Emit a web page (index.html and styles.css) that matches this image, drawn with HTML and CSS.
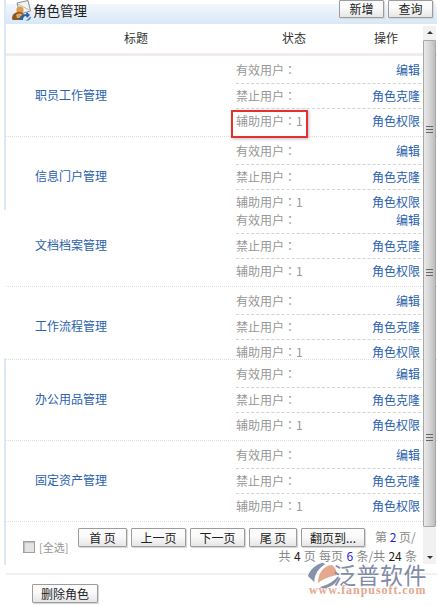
FILE: index.html
```html
<!DOCTYPE html>
<html lang="zh-CN">
<head>
<meta charset="utf-8">
<title>角色管理</title>
<link rel="stylesheet" href="styles.css">
</head>
<body>
<div class="page">
  <div class="edge edge-top"></div>
  <div class="edge edge-bottom"></div>

  <header class="titlebar">
    <svg class="title-icon" viewBox="0 0 20 21" width="20" height="21" aria-hidden="true">
      <path d="M6 3 17 0.5 19.5 11 9 14Z" fill="#f2f2f0" stroke="#8d8d8d" stroke-width="1"/>
      <path d="M7 4 18 10" stroke="#b9b9b9" fill="none"/>
      <circle cx="9" cy="10" r="3.6" fill="#e09a4a"/>
      <path d="M1 19c0-5 3-7 7-7s5 2 5 4l-3 4H2Z" fill="#8a5a22"/>
      <path d="M5 15c2-2 5-2 7 0l-2 3H6Z" fill="#e8a558"/>
      <path d="M8 20c0-3 3-6 7-6l1-2 3 3-3 3-1-2c-2 0-3 2-3 4Z" fill="#2f62a8"/>
      <path d="M13 20.500c3 0 5-2 6-4l1 1c-1 2-2 3-3 3Z" fill="#3d78c2"/>
    </svg>
    <h1 class="title">角色管理</h1>
    <div class="title-actions">
      <button class="btn btn-top" type="button">新增</button>
      <button class="btn btn-top" type="button">查询</button>
    </div>
  </header>

  <div class="table-head">
    <span class="head-title">标题</span>
    <span class="head-status">状态</span>
    <span class="head-action">操作</span>
  </div>

  <section class="group">
    <a class="group-name">职员工作管理</a>
    <div class="rows">
      <div class="row"><span class="status" lang="zh-TW">有效用户：</span><a class="action">编辑</a></div>
      <div class="row"><span class="status" lang="zh-TW">禁止用户：</span><a class="action">角色克隆</a></div>
      <div class="row"><span class="status marked" lang="zh-TW">辅助用户：1</span><a class="action">角色权限</a></div>
    </div>
  </section>

  <section class="group group-overlap">
    <a class="group-name">信息门户管理</a>
    <div class="rows">
      <div class="row"><span class="status" lang="zh-TW">有效用户：</span><a class="action">编辑</a></div>
      <div class="row"><span class="status" lang="zh-TW">禁止用户：</span><a class="action">角色克隆</a></div>
      <div class="row"><span class="status" lang="zh-TW">辅助用户：1</span><a class="action">角色权限</a></div>
    </div>
  </section>

  <section class="group group-flush">
    <a class="group-name">文档档案管理</a>
    <div class="rows">
      <div class="row"><span class="status" lang="zh-TW">有效用户：</span><a class="action">编辑</a></div>
      <div class="row"><span class="status" lang="zh-TW">禁止用户：</span><a class="action">角色克隆</a></div>
      <div class="row"><span class="status" lang="zh-TW">辅助用户：1</span><a class="action">角色权限</a></div>
    </div>
  </section>

  <section class="group group-overlap-next">
    <a class="group-name">工作流程管理</a>
    <div class="rows">
      <div class="row"><span class="status" lang="zh-TW">有效用户：</span><a class="action">编辑</a></div>
      <div class="row"><span class="status" lang="zh-TW">禁止用户：</span><a class="action">角色克隆</a></div>
      <div class="row"><span class="status" lang="zh-TW">辅助用户：1</span><a class="action">角色权限</a></div>
    </div>
  </section>

  <section class="group group-topline">
    <a class="group-name">办公用品管理</a>
    <div class="rows">
      <div class="row"><span class="status" lang="zh-TW">有效用户：</span><a class="action">编辑</a></div>
      <div class="row"><span class="status" lang="zh-TW">禁止用户：</span><a class="action">角色克隆</a></div>
      <div class="row"><span class="status" lang="zh-TW">辅助用户：1</span><a class="action">角色权限</a></div>
    </div>
  </section>

  <section class="group">
    <a class="group-name">固定资产管理</a>
    <div class="rows">
      <div class="row"><span class="status" lang="zh-TW">有效用户：</span><a class="action">编辑</a></div>
      <div class="row"><span class="status" lang="zh-TW">禁止用户：</span><a class="action">角色克隆</a></div>
      <div class="row"><span class="status" lang="zh-TW">辅助用户：1</span><a class="action">角色权限</a></div>
    </div>
  </section>

  <div class="pager">
    <label class="select-all"><span class="check"></span><span>[全选]</span></label>
    <div class="pager-main">
      <div class="pager-line">
        <button class="btn btn-first" type="button">首 页</button>
        <button class="btn btn-step" type="button">上一页</button>
        <button class="btn btn-step" type="button">下一页</button>
        <button class="btn btn-last" type="button">尾 页</button>
        <button class="btn btn-jump" type="button">翻页到...</button>
        <span class="page-now">第 <b class="num-blue">2</b> 页/</span>
      </div>
      <div class="page-total">共 <b class="num-dark">4</b> 页 每页 <b class="num-blue">6</b> 条/共 <b class="num-dark">24</b> 条</div>
    </div>
  </div>

  <footer class="footer">
    <button class="btn btn-delete" type="button">删除角色</button>
  </footer>

  <div class="scrollbar" aria-hidden="true">
    <span class="arrow-up"></span>
    <div class="thumb">
      <i class="grip grip-a"></i>
      <i class="grip grip-b"></i>
      <i class="grip grip-c"></i>
    </div>
    <span class="arrow-down"></span>
  </div>

  <div class="watermark">
    <svg class="wm-mark" viewBox="0 0 36 36" width="33" height="28" preserveAspectRatio="none" aria-hidden="true">
      <path d="M17 1C10 3 3 10 1 18l7 8C8 17 12 8 20 3Z" fill="#8492ab"/>
      <path d="M14 32c5-1 14-5 19-13l2 0c-2 8-10 15-18 15Z" fill="#8492ab"/>
      <path d="M12 27C12 15 18 5 27 4c5 4 6 10 5 13-5 1-14 4-20 10Z" fill="#e4a88e"/>
    </svg>
    <span class="wm-cn">泛普软件</span>
    <span class="wm-en">www.fanpusoft.com</span>
  </div>
</div>
</body>
</html>
```

FILE: styles.css
```css
* { box-sizing: border-box; }

html, body {
  margin: 0;
  padding: 0;
  background: #fff;
}

body {
  font: 12px/25px "Noto Sans CJK SC", "Liberation Sans", sans-serif;
  color: #333;
}

.page {
  position: relative;
  width: 437px;
  height: 606px;
  overflow: hidden;
  padding: 4px 0 0 6px;
}

.edge {
  position: absolute;
  left: 4px;
  width: 2px;
  background: #dbe8f8;
}
.edge-top { top: 0; height: 210px; }
.edge-bottom { top: 358px; height: 207px; }

/* Title bar */
.titlebar {
  display: flex;
  height: 20px;
  padding: 0 4px 0 5px;
  background: linear-gradient(#f3f7fc, #d9e7f6);
}
.title-icon {
  flex: none;
  margin-top: -4px;
}
.title {
  margin: -4px 0 0 2px;
  font-size: 13.5px;
  font-weight: 400;
  line-height: 20px;
  color: #222;
}
.title-actions {
  display: flex;
  gap: 4px;
  margin: -4px 0 0 auto;
}

/* Buttons */
.btn {
  display: block;
  height: 19px;
  padding: 0;
  border: 1px solid #9c9c9c;
  border-radius: 1px;
  background: linear-gradient(#fbfbfb 40%, #e6e6e6);
  box-shadow: 1px 1px 1px #d5d5d5;
  font: 12px/16px "Noto Sans CJK SC", "Liberation Sans", sans-serif;
  color: #222;
}
.btn-top { width: 45px; height: 18px; }
.btn-first { width: 49px; }
.btn-step { width: 55px; }
.btn-last { width: 48px; }
.btn-jump { width: 64px; }
.btn-delete { width: 66px; }

/* Table */
.table-head {
  display: grid;
  grid-template-columns: 258px 92px 1fr;
  height: 32px;
  padding-top: 2px;
  border-bottom: 3px solid #f2ecec;
  color: #333;
  line-height: 24px;
}
.head-title { padding-left: 118px; }
.head-status { padding-left: 18px; }
.head-action { padding-left: 18px; }

.group {
  display: grid;
  grid-template-columns: 230px 185px;
  align-items: center;
  padding: 2px 0;
  border-bottom: 1px dotted #ddd;
}
.group-overlap {
  padding-bottom: 0;
  margin-bottom: -7px;
  border-bottom: 0;
}
.group-flush { padding-top: 0; }
.group-overlap-next {
  padding-bottom: 0;
  margin-bottom: -6px;
  border-bottom: 0;
}
.group-topline { border-top: 1px dotted #ddd; }

.group-name {
  padding: 0 0 4px 29px;
  color: #2a62ad;
}
.row {
  position: relative;
  display: flex;
  justify-content: space-between;
  height: 25px;
  padding-right: 1px;
  line-height: 23px;
}
.row:first-child { height: 26px; }
.row:not(:last-child) { border-bottom: 1px dashed #d4d4d4; }
.status {
  font-family: "Noto Sans CJK TC", "Noto Sans CJK SC", sans-serif;
  color: #979797;
}
.action { color: #2a62ad; }

.marked::after {
  content: "";
  position: absolute;
  left: -5px;
  top: 1px;
  width: 73px;
  height: 24px;
  border: 2px solid #e33030;
  box-shadow: 1px 1px 3px #bbb;
}

/* Pager */
.pager {
  display: flex;
  height: 53px;
  padding: 6px 0 0 17px;
  border-bottom: 2px solid #f1f1f1;
}
.select-all {
  display: flex;
  align-items: center;
  gap: 4px;
  width: 50px;
  height: 14px;
  margin-top: 12px;
  line-height: 14px;
  font-size: 11px;
  color: #979797;
}
.check {
  flex: none;
  width: 12px;
  height: 12px;
  border: 1px solid #a0a0a0;
  background: #e4e4e4;
  box-shadow: inset 1px 1px 1px #bbb;
}
.pager-main {
  margin-left: 5px;
}
.pager-line {
  display: flex;
  gap: 4px;
  height: 20px;
}
.page-now {
  margin: -1px 0 0 6px;
  line-height: 20px;
  color: #888;
  white-space: nowrap;
}
.page-total {
  width: 339px;
  margin-top: -1px;
  text-align: right;
  line-height: 18px;
  word-spacing: 0.6px;
  color: #888;
  white-space: nowrap;
}
.num-blue { font-weight: 400; color: #2222dd; }
.num-dark { font-weight: 400; color: #222; }

.footer {
  padding: 9px 0 0 26px;
}

/* Scrollbar overlay */
.scrollbar {
  position: absolute;
  left: 423px;
  top: 26px;
  width: 13px;
  height: 538px;
  display: flex;
  flex-direction: column;
  align-items: center;
  background: #f1f1f1;
}
.arrow-up, .arrow-down {
  flex: none;
  width: 0;
  height: 0;
  margin: 5px 0;
  border-left: 3px solid transparent;
  border-right: 3px solid transparent;
}
.arrow-up { border-bottom: 3px solid #333; }
.arrow-down { margin-top: auto; border-top: 3px solid #333; }
.thumb {
  position: absolute;
  left: 0;
  top: 14px;
  width: 13px;
  height: 487px;
  border: 1px solid #a8a8a8;
  border-radius: 1px;
  background: linear-gradient(90deg, #e9e9e9, #d2d2d2 60%, #bcbcbc);
}
.grip {
  position: absolute;
  left: 2px;
  width: 7px;
  height: 7px;
  border-top: 1px solid #666;
  border-bottom: 1px solid #666;
  background: linear-gradient(#666, #666) center / 100% 1px no-repeat;
}
.grip-a { top: 85px; }
.grip-b { top: 228px; }
.grip-c { top: 393px; }

/* Watermark */
.watermark {
  position: absolute;
  left: 307px;
  top: 562px;
  width: 126px;
  height: 38px;
}
.wm-mark {
  display: block;
}
.wm-cn {
  position: absolute;
  left: 26px;
  top: 2px;
  font-size: 23px;
  line-height: 20px;
  letter-spacing: 0.5px;
  color: #7f8ca8;
  white-space: nowrap;
}
.wm-en {
  position: absolute;
  left: 2px;
  top: 22px;
  font: 700 12px/13px "Liberation Serif", serif;
  letter-spacing: 0.95px;
  color: #e4a78e;
  white-space: nowrap;
}
```
